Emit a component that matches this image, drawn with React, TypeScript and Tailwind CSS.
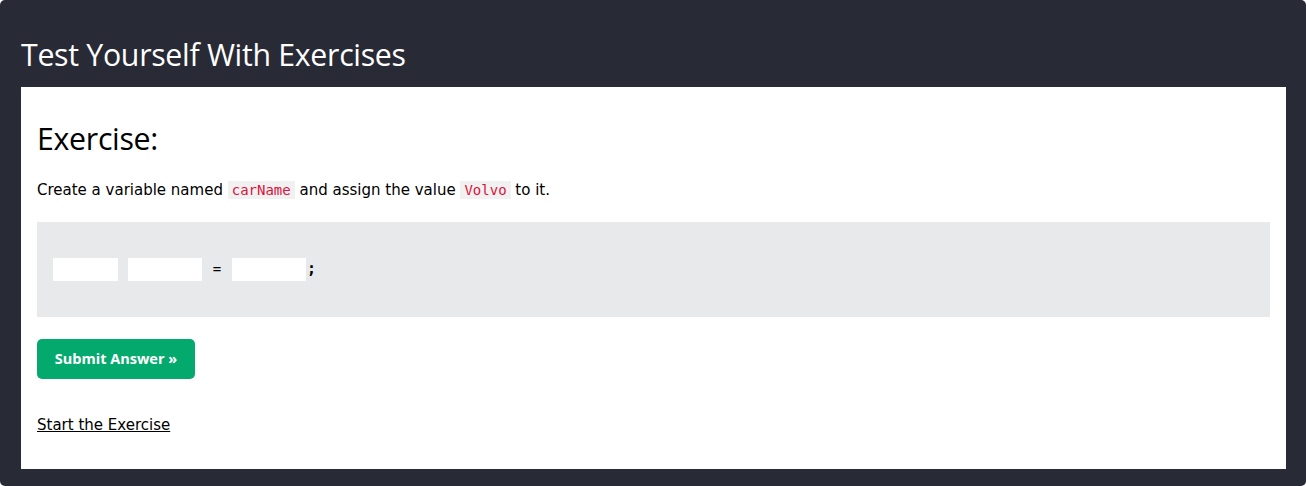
export default function App() {
  const heading = { fontFamily: '"Open Sans", "Noto Sans", sans-serif' };
  const body = { fontFamily: '"DejaVu Sans", Verdana, sans-serif' };
  const mono = { fontFamily: '"DejaVu Sans Mono", "Liberation Mono", monospace' };
  return (
    <div className="w-[1306px] h-[486px] bg-white">
      <div className="bg-[#282A35] rounded-[5px] pl-[21px] pr-[20px] pt-[31px] pb-[17px] h-[486px]">
        <h2 className="text-[30.3px] leading-[48px] text-white mb-[8px] tracking-[-0.3px]" style={heading}>
          Test Yourself With Exercises
        </h2>
        <div className="bg-white px-[16px] pt-[28px] h-[382px]">
          <h2 className="text-[30.3px] leading-[48px] text-black tracking-[-0.3px]" style={heading}>Exercise:</h2>
          <p className="text-[15px] leading-[24px] text-black mt-[15px]" style={body}>
            Create a variable named{" "}
            <code className="bg-[#f1f1f1] text-[crimson] text-[14px] px-[4px] py-[1px]" style={mono}>carName</code>{" "}
            and assign the value{" "}
            <code className="bg-[#f1f1f1] text-[crimson] text-[14px] px-[4px] py-[1px]" style={mono}>Volvo</code>{" "}
            to it.
          </p>
          <div className="bg-[#E7E9EB] mt-[20px] h-[95px] px-[16px] flex items-center text-[15px] text-black" style={mono}>
            <div className="flex items-center">
              <span className="inline-block w-[65px] h-[23px] bg-white"></span>
              <span className="inline-block w-[10px]"></span>
              <span className="inline-block w-[74px] h-[23px] bg-white"></span>
              <span className="inline-block w-[30px] text-center text-[14px]">=</span>
              <span className="inline-block w-[74px] h-[23px] bg-white"></span>
              <span className="ml-[1px] font-bold">;</span>
            </div>
          </div>
          <button
            className="mt-[22px] w-[158px] h-[40px] rounded-[5px] bg-[#04AA6D] text-white font-bold text-[14.5px] flex items-center justify-center"
            style={heading}
          >
            Submit Answer »
          </button>
          <div className="mt-[33px]">
            <a className="text-black underline text-[15px] leading-[24px]" style={body} href="#">
              Start the Exercise
            </a>
          </div>
        </div>
      </div>
    </div>
  );
}
